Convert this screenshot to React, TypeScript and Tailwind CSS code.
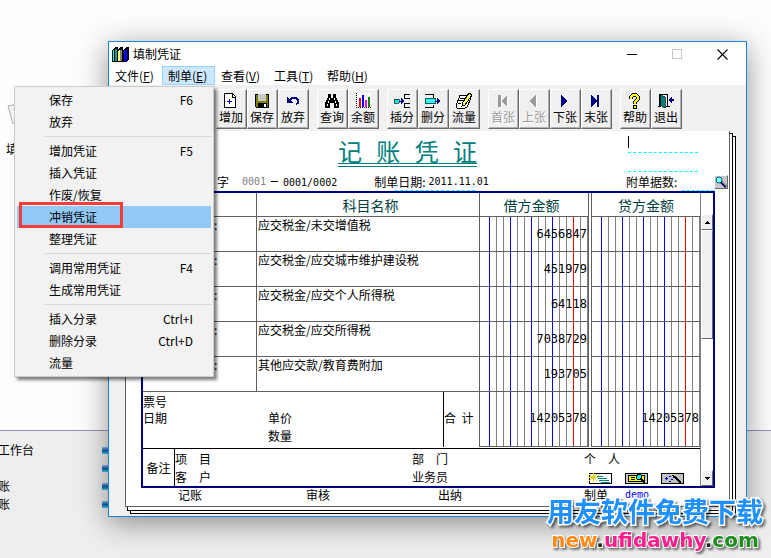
import type { ReactNode } from "react";

const LEDGER =
  "[background:linear-gradient(to_right,transparent_93px,#ff0000_93px_94px,transparent_94px)_no-repeat,repeating-linear-gradient(to_right,#0000ff_0_1px,#fff_1px_7px,#808080_7px_8px,#fff_8px_14px,#808080_14px_15px,#fff_15px_21px)_9px_0_no-repeat]";

const NAVY = "#000080";

const icons: Record<string, ReactNode> = {
  add: (
    <>
      <path d="M1.5.5h8l3 3V14.5h-11z" fill="#fff" stroke="#000" />
      <path d="M9.5 1v3H12" fill="none" stroke="#000" />
      <path d="M4 8.5h5M6.5 6v5" stroke="#0000c0" />
    </>
  ),
  save: (
    <>
      <path d="M1 1h14v14H2l-1-1z" fill="#000" />
      <path d="M2 2h2v6h8V2h2v12H2z" fill="#808000" />
      <path d="M4 1h8v7H4z" fill="#c8c8c8" />
      <path d="M4 10h9v5H4z" fill="#000" />
      <path d="M10 11h2v3h-2z" fill="#fff" />
    </>
  ),
  undo: (
    <>
      <path d="M2 4v6h6z" fill={NAVY} />
      <path d="M4 8l3-3h4l2 2v3l-2 1" fill="none" stroke={NAVY} strokeWidth="1.5" />
    </>
  ),
  find: (
    <>
      <path d="M4 1h3v4h2V1h3v3l3 6v5h-5v-5H6v5H1v-5l3-6z" fill="#000" />
      <path d="M5 5v2M4 8v2M3 11v2M10 5v2M11 8v2M12 11v2" stroke="#fff" />
    </>
  ),
  chart: (
    <>
      <path d="M2 0h14v14H2z" fill="#fff" />
      <path d="M1.5 0v14.5H16" fill="none" stroke="#000" strokeDasharray="1 1" />
      <path d="M4 5h2v9H4z" fill="#f00" />
      <path d="M7 2h2v12H7z" fill="#00f" />
      <path d="M10 7h2v7h-2z" fill="#f0f" />
      <path d="M13 4h2v10h-2z" fill="#008000" />
    </>
  ),
  insert: (
    <>
      <path d="M16 1.5h-6v4h6M16 10.5h-6v4h6" fill="none" stroke="#000" />
      <path d="M0 6h5v4H0z" fill="#00e0e0" stroke="#000" strokeWidth=".6" />
      <path d="M5 8h5" stroke={NAVY} />
      <path d="M7 5l4 3-4 3z" fill={NAVY} />
    </>
  ),
  remove: (
    <>
      <path d="M0 1.5h8v3M0 14.5h8v-3" fill="none" stroke="#000" />
      <path d="M0 5.5h10v5H0z" fill="#40f0f0" stroke="#006060" />
      <path d="M10 8h3" stroke={NAVY} />
      <path d="M12 5l4 3-4 3z" fill={NAVY} />
    </>
  ),
  flow: (
    <>
      <path d="M4 2h9l2 3-4 9-2 1H1l-1-2z" fill="#fff" stroke="#000" />
      <path d="M4 5h5M3 7.5h5M2 10h3" stroke="#000" />
      <path d="M13 0l3 2-7 10-3 1 1-4z" fill="#ffff60" stroke="#000" />
    </>
  ),
  first: (
    <>
      <path d="M3 2h3v12H3zM12 2v12L6 8z" fill="#fff" transform="translate(1 1)" />
      <path d="M3 2h3v12H3zM12 2v12L6 8z" fill="#9a9a9a" />
    </>
  ),
  prev: (
    <>
      <path d="M10 2v12L3 8z" fill="#fff" transform="translate(1 1)" />
      <path d="M10 2v12L3 8z" fill="#9a9a9a" />
    </>
  ),
  next: <path d="M4 2v12l6-6z" fill={NAVY} />,
  last: <path d="M3 2v12l6-6zM9 2h2v12H9z" fill={NAVY} />,
  help: (
    <>
      <path d="M4 6V4l2-2h3l2 2v2l-3 3v2" fill="none" stroke="#000" strokeWidth="4" />
      <path d="M4 6V4l2-2h3l2 2v2l-3 3v2" fill="none" stroke="#ffff00" strokeWidth="2" />
      <path d="M6 12h4v4H6z" fill="#000" />
      <path d="M7 13h2v2H7z" fill="#ffff00" />
    </>
  ),
  exit: (
    <>
      <path d="M0 13.5h3M1.5 13V1.5h8V13M8 13.5h4" fill="none" stroke="#000" />
      <path d="M2 1l5 3v11l-5-3z" fill="#008080" stroke="#000" strokeWidth=".7" />
      <path d="M10 7l4-4v3h2v2h-2v3z" fill={NAVY} />
    </>
  ),
};

const groups: { icon: string; text: string; off?: boolean }[][] = [
  [
    { icon: "add", text: "增加" },
    { icon: "save", text: "保存" },
    { icon: "undo", text: "放弃" },
  ],
  [
    { icon: "find", text: "查询" },
    { icon: "chart", text: "余额" },
  ],
  [
    { icon: "insert", text: "插分" },
    { icon: "remove", text: "删分" },
    { icon: "flow", text: "流量" },
  ],
  [
    { icon: "first", text: "首张", off: true },
    { icon: "prev", text: "上张", off: true },
    { icon: "next", text: "下张" },
    { icon: "last", text: "末张" },
  ],
  [
    { icon: "help", text: "帮助" },
    { icon: "exit", text: "退出" },
  ],
];

function Toolbar() {
  return (
    <div className="flex gap-2 bg-[#f0f0f0] pt-1 pb-[2px] pl-[107px]">
      {groups.map((group, i) => (
        <div key={i} className="flex">
          {group.map((b) => (
            <button
              key={b.text}
              disabled={b.off}
              className={`flex h-10 w-[31px] flex-col items-center border border-t-white border-r-[#696969] border-b-[#696969] border-l-white pt-[3px] pr-px leading-4 shadow-[inset_-1px_-1px_0_#b0b0b0] ${b.off ? "text-[#9a9a9a] [text-shadow:1px_1px_0_#fff]" : ""}`}
            >
              <svg width="16" height="16" viewBox="0 0 16 16" shapeRendering="crispEdges" aria-hidden="true">
                {icons[b.icon]}
              </svg>
              <span className="whitespace-nowrap">{b.text}</span>
            </button>
          ))}
        </div>
      ))}
    </div>
  );
}

const menus = [
  ["文件", "F"],
  ["制单", "E"],
  ["查看", "V"],
  ["工具", "T"],
  ["帮助", "H"],
];

function TitleBar() {
  return (
    <header className="flex h-6 items-center bg-white pl-[3px]">
      <svg width="17" height="17" viewBox="0 0 17 17" shapeRendering="crispEdges" aria-hidden="true">
        <path d="M0 4l3-3h3v15H0z" fill="#000" />
        <path d="M1 5l1-2v12H1z" fill="#0ff" />
        <path d="M3 3h2v12H3z" fill="#00a0a0" />
        <path d="M5 4l3-3h3v15H5z" fill="#000" />
        <path d="M6 5l2-2v12H6z" fill="#ffff60" />
        <path d="M8 4h2v11H8z" fill="#808080" />
        <path d="M11 4l3-3h3v12l-3 3h-3z" fill="#000" />
        <path d="M12 4h3v11h-3z" fill="#00f" />
      </svg>
      <h1 className="ml-1 flex-1 text-[12px] leading-4">填制凭证</h1>
      <button aria-label="最小化" className="flex h-6 w-[45px] items-center justify-center">
        <span className="h-px w-[10px] bg-black" />
      </button>
      <button aria-label="最大化" disabled className="flex h-6 w-[45px] items-center justify-center">
        <span className="size-[10px] border border-[#c8c8c8]" />
      </button>
      <button aria-label="关闭" className="flex h-6 w-[47px] items-center justify-center">
        <svg width="11" height="11" viewBox="0 0 11 11" aria-hidden="true">
          <path d="M.5.5l10 10M10.5.5l-10 10" stroke="#000" strokeWidth="1.1" />
        </svg>
      </button>
    </header>
  );
}

function MenuBar() {
  return (
    <nav className="flex h-[19px] bg-white">
      {menus.map(([name, key]) => (
        <button
          key={key}
          className={`flex w-[53px] items-center border pl-[5px] whitespace-nowrap ${key === "E" ? "border-[#99d1ff] bg-[#cce8ff]" : "border-transparent"}`}
        >
          {name}(<u>{key}</u>)
        </button>
      ))}
    </nav>
  );
}

function VoucherHead() {
  return (
    <>
      <div className="flex h-[41px] justify-between pr-[31px] pl-[212px]">
        <h2 className="mt-2 flex h-[28px] w-[139px] justify-between border-b-4 border-double border-[#008080] text-[24px] leading-6 text-[#008080]">
          <span>记</span>
          <span>账</span>
          <span>凭</span>
          <span>证</span>
        </h2>
        <div className="flex w-[70px] flex-col">
          <div className="flex h-[22px] items-center border-b border-dashed border-[#00ffff]">
            <span className="h-3 w-px bg-black" />
            <input aria-label="凭证编号" className="w-full outline-none" />
          </div>
          <input aria-label="附加编号" className="h-[19px] border-b border-dashed border-[#00ffff] outline-none" />
        </div>
      </div>
      <div className="flex h-[19px] items-center pl-[91px]">
        <label htmlFor="no">字</label>
        <input
          id="no"
          defaultValue="0001"
          className="ml-[13px] w-[26px] font-['DejaVu_Sans_Mono',monospace] text-[10px] text-[#808080] outline-none"
        />
        <span className="ml-[3px] h-px w-[7px] bg-black" />
        <span className="mt-[2px] ml-[5px] font-['DejaVu_Sans_Mono',monospace] text-[10px]">0001/0002</span>
        <div className="relative ml-[37px] flex h-full items-center">
          <label htmlFor="date">制单日期:</label>
          <input
            id="date"
            defaultValue="2011.11.01"
            className="ml-[3px] w-[64px] font-['DejaVu_Sans_Mono',monospace] text-[10px] outline-none"
          />
          <span className="absolute bottom-0 left-[21px] w-20 border-b border-dashed border-[#00ffff]" />
        </div>
        <label htmlFor="docs" className="ml-auto w-[56px] whitespace-nowrap">
          附单据数:
        </label>
        <input id="docs" className="h-full w-8 border-b border-dashed border-[#00ffff] outline-none" />
        <button
          aria-label="查找"
          className="mr-px flex size-[14px] items-center justify-center border border-t-white border-r-[#696969] border-b-[#696969] border-l-white bg-[#c8c8c8]"
        >
          <svg width="12" height="12" viewBox="0 0 12 12" aria-hidden="true">
            <path d="M6 6l5 5" stroke={NAVY} strokeWidth="2.5" />
            <circle cx="4" cy="4" r="3" fill="#80ffff" stroke="#006080" />
            <path d="M7 6l4 4" stroke="#ffff00" strokeWidth=".7" />
          </svg>
        </button>
      </div>
    </>
  );
}

const rows = [
  ["应交税金/未交增值税", "6456847"],
  ["应交税金/应交城市维护建设税", "451979"],
  ["应交税金/应交个人所得税", "64118"],
  ["应交税金/应交所得税", "7038729"],
  ["其他应交款/教育费附加", "193705"],
];

const DIGITS = "pr-px text-right font-['DejaVu_Sans_Mono',monospace] text-[12px]";
const LINE = "border-[#606060]";

function Ledger() {
  return (
    <table className="w-full table-fixed border-separate border-spacing-0">
      <colgroup>
        <col className="w-[114px]" />
        <col />
        <col className="w-[109px]" />
        <col className="w-[2px]" />
        <col className="w-[109px]" />
      </colgroup>
      <thead>
        <tr className="h-6 text-[14px] leading-5 text-[#004040]">
          <th className={`border-r border-b ${LINE}`} aria-label="摘要" />
          <th className={`border-r border-b pl-[5px] font-normal ${LINE}`}>科目名称</th>
          <th className={`border-r border-b pr-[5px] font-normal ${LINE}`}>借方金额</th>
          <td />
          <th className={`border-b border-l font-normal ${LINE}`}>贷方金额</th>
        </tr>
      </thead>
      <tbody>
        {rows.map(([name, debit]) => (
          <tr key={name} className="h-[35px]">
            <td className={`border-r border-b pl-[71px] align-top leading-4 ${LINE}`}>:</td>
            <td className={`border-r border-b pl-px align-top leading-[15px] whitespace-nowrap ${LINE}`}>{name}</td>
            <td className={`border-r border-b ${DIGITS} ${LINE} ${LEDGER}`}>{debit}</td>
            <td />
            <td className={`border-b border-l ${LINE} ${LEDGER}`} />
          </tr>
        ))}
      </tbody>
      <tfoot>
        <tr className="h-[55px]">
          <td colSpan={2} className={`border-r ${LINE}`}>
            <div className="flex h-[55px] leading-[18px]">
              <div className="w-[125px] pt-[2px] leading-4">
                <p>票号</p>
                <p>日期</p>
              </div>
              <div className="flex-1 pt-[17px]">
                <p>单价</p>
                <p>数量</p>
              </div>
              <div className="w-[36px] border-l border-black pt-[17px] whitespace-pre">合  计</div>
            </div>
          </td>
          <td className={`border-r border-b pb-[2px] ${DIGITS} ${LINE} ${LEDGER}`}>14205378</td>
          <td />
          <td className={`border-b border-l pb-[2px] ${DIGITS} ${LINE} ${LEDGER}`}>14205378</td>
        </tr>
      </tfoot>
    </table>
  );
}

function Remarks() {
  return (
    <div className="mt-px flex h-[38px] border-t border-black">
      <div className="flex w-8 items-center justify-center border-r border-black">备注</div>
      <div className="grid flex-1 grid-cols-[237fr_172fr_116fr] pt-px leading-[18px]">
        <div>
          <p>项　目</p>
          <p>客　户</p>
        </div>
        <div>
          <p>部　门</p>
          <p>业务员</p>
        </div>
        <div>
          <p>个　人</p>
          <div className="flex gap-[13px] pt-[5px] pl-[5px]">
            <button aria-label="新建">
              <svg width="23" height="11" viewBox="0 0 23 11" shapeRendering="crispEdges" className="block">
                <path d="M.5.5h22v10H.5z" fill="#fff" stroke="#000" />
                <path d="M8 3.5h6M9 5.5h9M10 7.5h10M12 9.5h9" stroke="#008080" />
                <path d="M0 1l8 7M8 1L0 8M4 0v9M0 4h9" stroke="#e0d000" />
              </svg>
            </button>
            <button aria-label="查看单据">
              <svg width="23" height="11" viewBox="0 0 23 11" shapeRendering="crispEdges" className="block">
                <path d="M.5.5h22v10H.5z" fill="#c8c8c8" stroke="#000" />
                <path d="M3.5 2.5h16v6h-16z" fill="#ff0" stroke="#000" />
                <path d="M6 4.5h4M6 6.5h4" stroke="#000" />
                <circle cx="14" cy="4" r="2.5" fill="#0ff" stroke="#000" />
                <path d="M16 6l4 4" stroke="#000" strokeWidth="2" />
              </svg>
            </button>
            <button aria-label="向导">
              <svg width="23" height="11" viewBox="0 0 23 11" shapeRendering="crispEdges" className="block">
                <path d="M.5.5h22v10H.5z" fill="#c0c0c0" stroke="#000" />
                <path d="M4 5.5h3M5.5 4v3M8 3.5h2M10 6.5h2M8 8.5h2M12 4.5h1" stroke="#0000c0" />
                <path d="M12 2l8 8" stroke="#000" strokeWidth="2" />
                <path d="M12 1l2 2" stroke="#ff0" />
              </svg>
            </button>
          </div>
        </div>
      </div>
    </div>
  );
}

function Arrow({ down }: { down?: boolean }) {
  return (
    <button
      aria-label={down ? "向下" : "向上"}
      className="flex h-4 w-full items-center justify-center border border-t-white border-r-[#696969] border-b-[#696969] border-l-white bg-[#f0f0f0]"
    >
      <svg width="5" height="3" viewBox="0 0 5 3" shapeRendering="crispEdges" aria-hidden="true">
        <path d={down ? "M0 0h5v1H4v1H3v1H2V2H1V1H0z" : "M2 0h1v1h1v1h1v1H0V2h1V1h1z"} />
      </svg>
    </button>
  );
}

function VoucherWindow() {
  return (
    <section className="absolute top-[41px] right-6 left-[108px] border border-[#1883d7] bg-[#f0f0f0] shadow-[0_6px_28px_rgba(0,0,0,0.42)]">
      <TitleBar />
      <MenuBar />
      <Toolbar />
      <div className="relative mr-[10px] mb-[2px] ml-4 pr-[6px] pb-[7px]">
        <div className="absolute top-[5px] right-0 bottom-0 left-[5px] border border-black bg-white" />
        <div className="absolute top-[2px] right-[3px] bottom-[3px] left-[2px] border border-black bg-white" />
        <div className="relative border-r border-b border-l border-[#606060] bg-white">
          <VoucherHead />
          <div className="mr-[14px] ml-[15px] flex border-2 border-[#000080]">
            <div className="min-w-0 flex-1 border-r border-[#808080]">
              <Ledger />
              <Remarks />
            </div>
            <div className="flex w-3 flex-col pt-[21px]">
              <Arrow />
              <div className="h-[109px] border border-t-white border-r-[#696969] border-b-[#696969] border-l-white bg-[#f0f0f0]" />
              <div className="flex-1" />
              <Arrow down />
            </div>
          </div>
          <footer className="grid h-[18px] grid-cols-[128fr_132fr_146fr_41fr_104fr] pl-[52px] leading-[14px]">
            <span>记账</span>
            <span>审核</span>
            <span>出纳</span>
            <span>制单</span>
            <span className="font-['DejaVu_Sans_Mono',monospace] text-[10px] text-[#0000ff]">demo</span>
          </footer>
        </div>
      </div>
    </section>
  );
}

const commands: [string, string?][][] = [
  [["保存", "F6"], ["放弃"]],
  [["增加凭证", "F5"], ["插入凭证"], ["作废/恢复"], ["冲销凭证"], ["整理凭证"]],
  [["调用常用凭证", "F4"], ["生成常用凭证"]],
  [["插入分录", "Ctrl+I"], ["删除分录", "Ctrl+D"], ["流量"]],
];

function DropDown() {
  return (
    <div
      role="menu"
      className="absolute top-[86px] left-[14px] w-[200px] border border-[#ccc] bg-[#f2f2f2] p-[2px] shadow-[3px_3px_3px_rgba(0,0,0,0.5)]"
    >
      {commands.map((group, i) => (
        <div key={i}>
          {i > 0 && <div role="separator" className="my-[3px] ml-7 h-px bg-[#d7d7d7]" />}
          {group.map(([name, key]) => (
            <button
              key={name}
              role="menuitem"
              className={`flex h-[22px] w-full items-center justify-between pr-[18px] pb-px pl-8 ${name === "冲销凭证" ? "bg-[#91c9f7]" : ""}`}
            >
              <span>{name}</span>
              {key && <span>{key}</span>}
            </button>
          ))}
        </div>
      ))}
      <div className="pointer-events-none absolute top-[115px] left-1 h-[26px] w-[104px] border-3 border-[#fb3a3a]" />
    </div>
  );
}

function Watermark() {
  return (
    <div className="absolute right-2 bottom-1 w-[216px] text-center font-bold whitespace-nowrap [filter:drop-shadow(2px_2px_1px_rgba(0,0,0,0.5))]">
      <p className="text-[27px] leading-[30px] text-[#1e90ff] [-webkit-text-stroke:3px_#fff] [paint-order:stroke_fill]">
        用友软件免费下载
      </p>
      <p className="font-['DejaVu_Sans',sans-serif] text-[20px] leading-[28px] [-webkit-text-stroke:2px_#fff] [paint-order:stroke_fill]">
        <span className="text-[#ff8c1a]">new</span>
        <span className="text-[#222]">.</span>
        <span className="text-[#ff1e8c]">ufidawhy</span>
        <span className="text-[#222]">.</span>
        <span className="text-[#1e8c1e]">com</span>
      </p>
    </div>
  );
}

export default function App() {
  return (
    <main className="relative flex h-screen flex-col overflow-hidden bg-[#fdfdfd] font-['Noto_Sans_CJK_SC',sans-serif] text-[12px] leading-4 text-black">
      <div className="h-[430px] pt-[104px] pl-[6px]">
        <svg width="20" height="20" viewBox="0 0 20 20" aria-hidden="true">
          <path d="M2 2l10-2 6 16-11 4z" fill="#f4f4f4" stroke="#aaa" />
          <path d="M7 5l6-1M8 8l6-2" stroke="#bbb" />
        </svg>
        <p className="mt-[17px]">填</p>
      </div>
      <ul className="flex-1 border-t border-[#9093c0] bg-[#eee] pt-[10px] leading-[18px]">
        {["工作台", "", "账", "账"].map((text, i) => (
          <li key={i} className="flex h-[18px] items-center">
            <span className="-ml-[2px] w-[104px]">{text}</span>
            <span className="h-[7px] w-5 bg-linear-to-b from-[#8cc8f0] via-[#0a60b0] to-[#40d0f0]" />
          </li>
        ))}
      </ul>
      <VoucherWindow />
      <DropDown />
      <Watermark />
    </main>
  );
}
